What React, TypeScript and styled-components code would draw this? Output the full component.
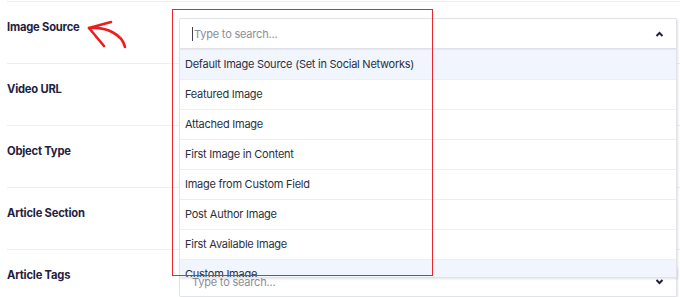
import React from 'react'
import styled, {createGlobalStyle} from 'styled-components'

const GlobalStyle = createGlobalStyle`
  html, body {
    margin: 0;
    padding: 0;
    background: #ffffff;
  }
  body {
    font-family: Inter, "Noto Sans", sans-serif;
    color: #1e2240;
    overflow: hidden;
  }
`

const Page = styled.div`
  position: relative;
  width: 680px;
  height: 297px;
  padding-top: 1px;
  box-sizing: border-box;
`

const FieldRow = styled.div`
  display: grid;
  grid-template-columns: 172px 498px;
  height: 62px;
  box-sizing: border-box;
  border-top: 1px solid #eceef2;
  margin-left: 7px;
  padding-top: 16px;
`

const FieldLabel = styled.div`
  font-size: 11.2px;
  font-weight: 700;
  letter-spacing: -0.2px;
  line-height: 18px;
  color: #1e2240;
`

const SelectWrap = styled.div`
  position: relative;
`

const SelectBox = styled.div<{$open?: boolean}>`
  display: flex;
  align-items: center;
  justify-content: space-between;
  height: 31px;
  box-sizing: border-box;
  padding: 0 12px 0 12px;
  background: #ffffff;
  border: 1px solid #e1e3e8;
  border-radius: 2px 2px ${(p) => (p.$open ? '0 0' : '2px 2px')};
  box-shadow: 1px 1px 2px rgba(30, 34, 64, 0.12);
`

const SearchInput = styled.span`
  display: flex;
  align-items: center;
  font-size: 11px;
  letter-spacing: -0.2px;
  color: #8a8e99;
`

const Caret = styled.span`
  display: inline-block;
  width: 1px;
  height: 14px;
  margin-right: 1px;
  background: #3c4150;
`

const OptionList = styled.ul`
  position: absolute;
  z-index: 2;
  top: 31px;
  left: 0;
  right: 0;
  max-height: 228px;
  overflow: hidden;
  margin: 0;
  padding: 0;
  list-style: none;
  background: #ffffff;
  border: 1px solid #e1e3e8;
  border-top: none;
  box-shadow: 1px 1px 2px rgba(30, 34, 64, 0.12);
`

const OptionItem = styled.li<{$highlight?: boolean}>`
  height: 30px;
  box-sizing: border-box;
  display: flex;
  align-items: center;
  padding: 0 5px 1px;
  font-size: 11px;
  letter-spacing: -0.25px;
  color: #2b3040;
  border-top: 1px solid #eceef2;
  background: ${(p) => (p.$highlight ? '#f1f5fd' : '#ffffff')};
  &:first-child {
    border-top: 1px solid #e6e8ec;
  }
`

const Annotation = styled.div`
  position: absolute;
  z-index: 3;
  left: 172px;
  top: 9px;
  width: 261px;
  height: 267px;
  box-sizing: border-box;
  border: 1.5px solid #e8262b;
  pointer-events: none;
`

const ArrowMark = styled.svg`
  position: absolute;
  z-index: 3;
  left: 84px;
  top: 16px;
`

const Chevron = ({up}: {up?: boolean}) => (
  <svg width="9" height="6" viewBox="0 0 9 6">
    <path
      d={up ? 'M1.5 5 L4.5 2 L7.5 5' : 'M1.5 1 L4.5 4 L7.5 1'}
      fill="none"
      stroke="#1e2240"
      strokeWidth="2"
    />
  </svg>
)

const options = [
  'Default Image Source (Set in Social Networks)',
  'Featured Image',
  'Attached Image',
  'First Image in Content',
  'Image from Custom Field',
  'Post Author Image',
  'First Available Image',
  'Custom Image',
]

const labels = ['Image Source', 'Video URL', 'Object Type', 'Article Section', 'Article Tags']

export default function App() {
  return (
    <>
      <GlobalStyle />
      <Page>
        {labels.map((label, i) => (
          <FieldRow key={label}>
            <FieldLabel>{label}</FieldLabel>
            {i === 0 && (
              <SelectWrap>
                <SelectBox $open>
                  <SearchInput>
                    <Caret />
                    Type to search...
                  </SearchInput>
                  <Chevron up />
                </SelectBox>
                <OptionList>
                  {options.map((o, n) => (
                    <OptionItem key={o} $highlight={n === 0 || n === options.length - 1}>
                      {o}
                    </OptionItem>
                  ))}
                </OptionList>
              </SelectWrap>
            )}
            {i === labels.length - 1 && (
              <SelectWrap>
                <SelectBox>
                  <SearchInput>Type to search...</SearchInput>
                  <Chevron />
                </SelectBox>
              </SelectWrap>
            )}
          </FieldRow>
        ))}
        <Annotation />
        <ArrowMark width="46" height="36" viewBox="0 0 46 36">
          <g fill="none" stroke="#ee1c1c" strokeWidth="2.6" strokeLinecap="round">
            <path d="M5 12 L27 6" />
            <path d="M5 12 L20 30" />
            <path d="M7 12 C22 11 38 18 41 31" />
          </g>
        </ArrowMark>
      </Page>
    </>
  )
}
